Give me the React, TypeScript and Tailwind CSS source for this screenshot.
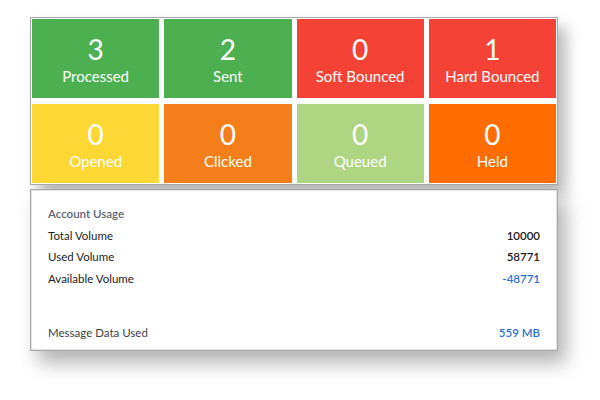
const stats = [
  { value: 3, label: 'Processed', color: 'bg-[#4caf50]' },
  { value: 2, label: 'Sent', color: 'bg-[#4caf50]' },
  { value: 0, label: 'Soft Bounced', color: 'bg-[#f44336]' },
  { value: 1, label: 'Hard Bounced', color: 'bg-[#f44336]' },
  { value: 0, label: 'Opened', color: 'bg-[#fdd835]' },
  { value: 0, label: 'Clicked', color: 'bg-[#f47f1a]' },
  { value: 0, label: 'Queued', color: 'bg-[#aed581]' },
  { value: 0, label: 'Held', color: 'bg-[#ff6d00]' },
]

const usage = [
  { label: 'Total Volume', value: '10000', blue: false },
  { label: 'Used Volume', value: '58771', blue: false },
  { label: 'Available Volume', value: '-48771', blue: true },
]

export default function App() {
  return (
    <div
      className="w-[600px] h-[400px] bg-white pl-[30px] pt-[17px]"
      style={{ fontFamily: 'Lato, "Open Sans", sans-serif' }}
    >
      {/* stat tiles */}
      <div className="w-[528px] border border-[#a9a9a9] p-px bg-white shadow-[8px_10px_14px_rgba(0,0,0,0.28)]">
        <div className="grid grid-cols-4 gap-x-[5px] gap-y-[6px]">
          {stats.map((s) => (
            <div
              key={s.label}
              className={`${s.color} h-[79px] pt-[3px] flex flex-col items-center justify-center text-white`}
            >
              <div className="text-[28px] leading-[30px]">{s.value}</div>
              <div className="text-[15px] leading-[20px] mt-[2px]">{s.label}</div>
            </div>
          ))}
        </div>
      </div>

      {/* account usage */}
      <div className="mt-[4px] w-[528px] h-[162px] border border-[#a9a9a9] bg-white shadow-[8px_12px_18px_rgba(0,0,0,0.3)]">
        <div className="h-full border border-[#e2e2e2] pt-[14px] pl-[16px] pr-[16px] flex flex-col text-[11.5px]">
          <div className="h-[18px] leading-[18px] text-[#5b6474] font-semibold">Account Usage</div>
          {usage.map((u) => (
            <div key={u.label} className="mt-[3.5px] h-[18px] leading-[18px] flex justify-between">
              <span className="text-[#222]">{u.label}</span>
              <span className={`font-semibold ${u.blue ? 'text-[#2c6fd1]' : 'text-[#222]'}`}>{u.value}</span>
            </div>
          ))}
          <div className="mt-[36px] h-[18px] leading-[18px] flex justify-between">
            <span className="text-[#3a3f4a]">Message Data Used</span>
            <span className="font-semibold text-[#2c6fd1]">559 MB</span>
          </div>
        </div>
      </div>
    </div>
  )
}
